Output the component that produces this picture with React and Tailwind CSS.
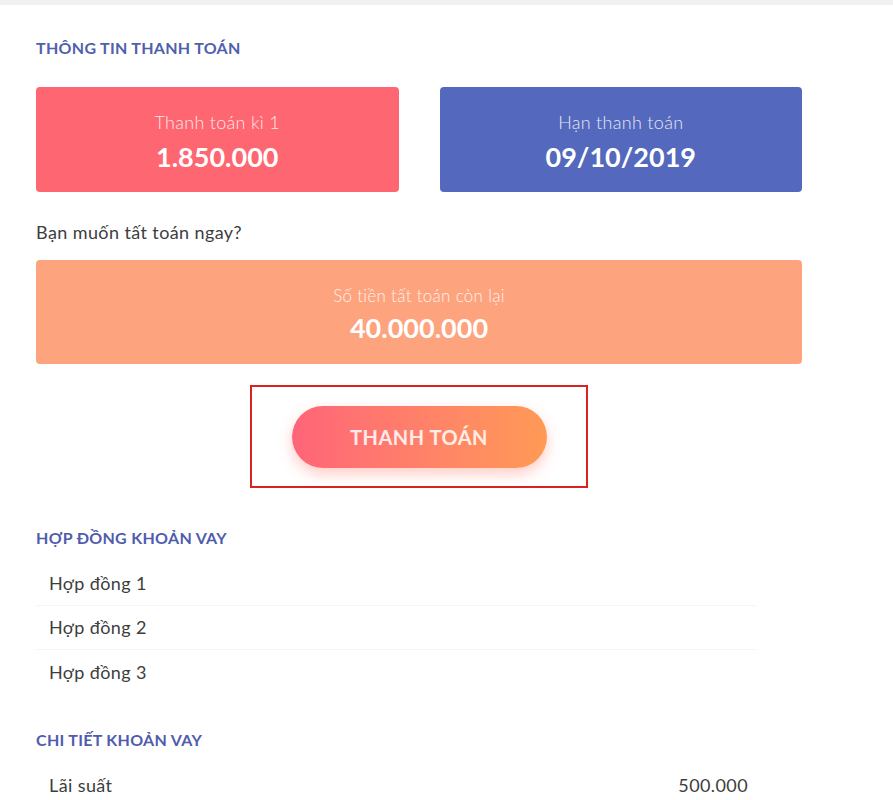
export default function App() {
  return (
    <div className="min-h-screen bg-white font-['Lato','Noto_Sans',sans-serif] text-[#3a3a3a]">
      <div className="h-[5px] bg-[#f1f1f3]" />
      <div className="ml-9 w-[766px] pt-[33px]">
        <h2 className="text-[16px] font-bold leading-5 tracking-[0.3px] text-[#4f60ad]">THÔNG TIN THANH TOÁN</h2>

        <div className="mt-[29px] flex gap-[41px]">
          <div className="flex h-[105px] flex-1 flex-col items-center justify-center rounded-[4px] bg-[#fe6671] pt-[5px] text-white">
            <span className="text-[18px] font-light leading-[22px] tracking-[0.3px] opacity-85">Thanh toán kì 1</span>
            <span className="mt-[8px] text-[27px] font-bold leading-8">1.850.000</span>
          </div>
          <div className="flex h-[105px] flex-1 flex-col items-center justify-center rounded-[4px] bg-[#5468bd] pt-[5px] text-white">
            <span className="text-[18px] font-light leading-[22px] tracking-[0.3px] opacity-85">Hạn thanh toán</span>
            <span className="mt-[8px] text-[27px] font-bold leading-8">09/10/2019</span>
          </div>
        </div>

        <p className="mt-[28px] text-[18px] leading-6 tracking-[0.4px] text-[#3d3d3d]">Bạn muốn tất toán ngay?</p>

        <div className="mt-[16px] flex h-[104px] flex-col items-center justify-center rounded-[4px] bg-[#fda47f] pt-[5px] text-white">
          <span className="text-[17px] font-light leading-[22px] tracking-[0.3px] opacity-85">Số tiền tất toán còn lại</span>
          <span className="mt-[5px] text-[27px] font-bold leading-8">40.000.000</span>
        </div>

        <div className="mt-[21px] flex justify-center">
          <div className="flex h-[103px] w-[338px] items-center justify-center border-2 border-[#d8231f]">
            <button className="h-[62px] w-[255px] rounded-full bg-gradient-to-r from-[#ff6478] to-[#ff9a55] text-[20px] font-bold tracking-[0.5px] text-white/85 shadow-[0_6px_14px_rgba(255,110,90,0.35)]">
              THANH TOÁN
            </button>
          </div>
        </div>

        <h2 className="mt-[40px] text-[16px] font-bold leading-5 tracking-[0.3px] text-[#4f5cae]">HỢP ĐỒNG KHOẢN VAY</h2>
        <ul className="mt-[14px] w-[720px]">
          {["Hợp đồng 1", "Hợp đồng 2", "Hợp đồng 3"].map((item, i) => (
            <li
              key={item}
              className={`flex h-[44px] items-center pl-[13px] text-[18px] tracking-[0.4px] text-[#3d3d3d] ${i < 2 ? "border-b border-[#f5f5f5]" : ""}`}
            >
              {item}
            </li>
          ))}
        </ul>

        <h2 className="mt-[36px] text-[16px] font-bold leading-5 tracking-[0.3px] text-[#4f5cae]">CHI TIẾT KHOẢN VAY</h2>
        <div className="mt-[13px] flex h-[44px] w-[712px] items-center justify-between pl-[13px] text-[18px] tracking-[0.4px] text-[#3d3d3d]">
          <span>Lãi suất</span>
          <span>500.000</span>
        </div>
      </div>
    </div>
  );
}
